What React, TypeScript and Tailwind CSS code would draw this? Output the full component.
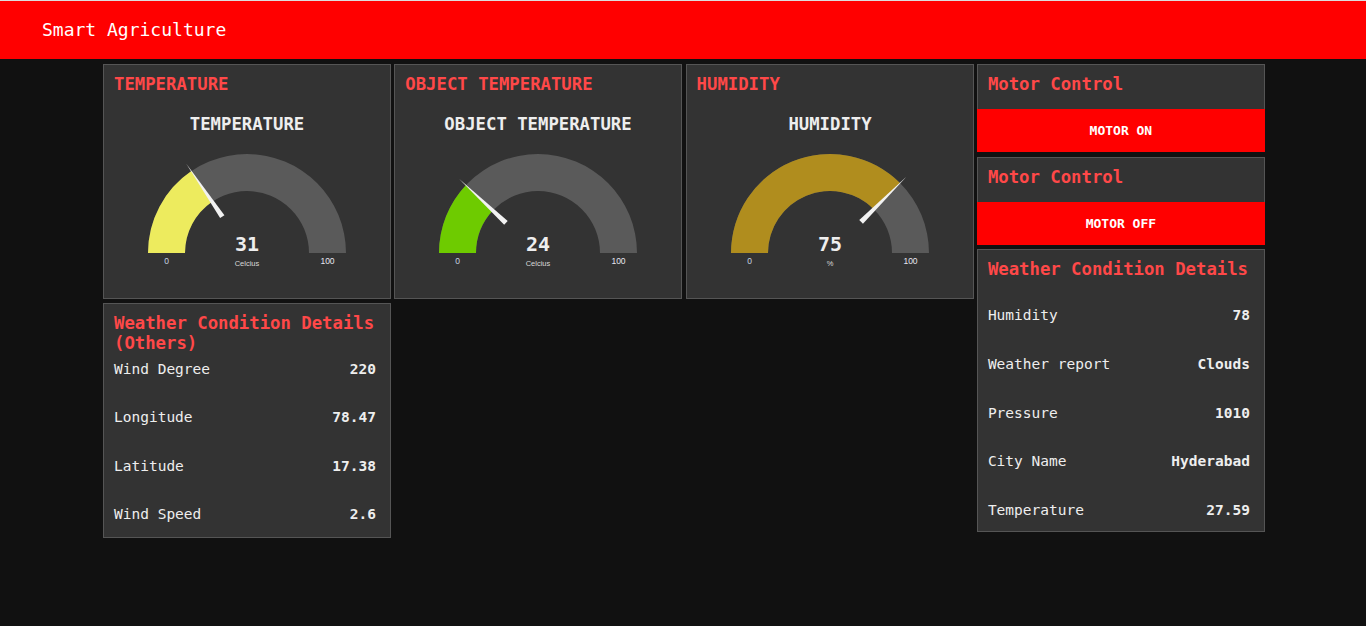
import React from "react";

const mono = "font-['DejaVu_Sans_Mono','Liberation_Mono',monospace]";

function pt(rad: number, deg: number, cx: number, cy: number) {
  const a = (deg * Math.PI) / 180;
  return [cx + rad * Math.cos(a), cy - rad * Math.sin(a)];
}

function Gauge({ title, value, unit, color }: { title: string; value: number; unit: string; color: string }) {
  const cx = 143, cy = 159, R = 99, r = 62;
  const end = 180 - 1.8 * value;
  const [o0x, o0y] = pt(R, 180, cx, cy);
  const [o1x, o1y] = pt(R, end, cx, cy);
  const [i1x, i1y] = pt(r, end, cx, cy);
  const [i0x, i0y] = pt(r, 180, cx, cy);
  const [bx, by] = pt(R, 0, cx, cy);
  const [bix, biy] = pt(r, 0, cx, cy);
  const bg = `M${o0x} ${o0y} A${R} ${R} 0 0 1 ${bx} ${by} L${bix} ${biy} A${r} ${r} 0 0 0 ${i0x} ${i0y} Z`;
  const fill = `M${o0x} ${o0y} A${R} ${R} 0 0 1 ${o1x} ${o1y} L${i1x} ${i1y} A${r} ${r} 0 0 0 ${i0x} ${i0y} Z`;
  const a = (end * Math.PI) / 180;
  const [tx, ty] = pt(108, end, cx, cy);
  const [nx, ny] = pt(44, end, cx, cy);
  const px = Math.sin(a) * 2.6, py = Math.cos(a) * 2.6;
  const needle = `${tx},${ty} ${nx + px},${ny + py} ${nx - px},${ny - py}`;

  return (
    <svg width="286" height="204" className="block">
      <text x={cx} y={30} textAnchor="middle" dominantBaseline="central" fill="#eeeeee" fontSize="17.3" fontWeight="bold" fontFamily="DejaVu Sans Mono, monospace">
        {title}
      </text>
      <path d={bg} fill="#5a5a5a" />
      <path d={fill} fill={color} />
      <polygon points={needle} fill="#f2f2f2" />
      <text x={cx} y={157} textAnchor="middle" fill="#eeeeee" fontSize="20" fontWeight="bold" fontFamily="DejaVu Sans Mono, monospace">
        {value}
      </text>
      <text x={cx} y={172} textAnchor="middle" fill="#d8d8d8" fontSize="7.5" fontFamily="Liberation Sans, Arial, sans-serif">
        {unit}
      </text>
      <text x={cx - 80.5} y={170} textAnchor="middle" fill="#c8d4e0" fontSize="8.5" fontFamily="Liberation Sans, Arial, sans-serif">
        0
      </text>
      <text x={cx + 80.5} y={170} textAnchor="middle" fill="#e6e6f0" fontSize="8.5" fontFamily="Liberation Sans, Arial, sans-serif">
        100
      </text>
    </svg>
  );
}

function GaugeCard(props: { heading: string; title: string; value: number; unit: string; color: string }) {
  return (
    <div className="h-[235px] bg-[#333333] border border-[#555555] overflow-hidden">
      <div className="px-[10px] pt-[9px] h-[29px] text-[17.3px] leading-[20px] font-bold text-[#ff4848]">{props.heading}</div>
      <Gauge title={props.title} value={props.value} unit={props.unit} color={props.color} />
    </div>
  );
}

function MotorCard({ label }: { label: string }) {
  return (
    <div className="h-[88px] bg-[#333333] border border-[#555555]">
      <div className="px-[10px] pt-[9px] h-[44px] text-[17.3px] leading-[20px] font-bold text-[#ff4848]">Motor Control</div>
      <button className="-mx-px w-[calc(100%+2px)] h-[43px] bg-[#ff0000] text-white text-[13px] font-bold flex items-center justify-center">
        {label}
      </button>
    </div>
  );
}

function DetailCard({ title, rows, height, gap, offset }: { title: string; rows: [string, string][]; height: string; gap: string; offset: string }) {
  return (
    <div className={`${height} bg-[#333333] border border-[#555555] overflow-hidden`}>
      <div className="px-[10px] pt-[9px] h-[46px] text-[17.3px] leading-[20px] font-bold text-[#ff4848]">{title}</div>
      <div className={`flex flex-col ${gap} ${offset} pl-[10px] pr-[14px]`}>
        {rows.map(([k, v]) => (
          <div key={k} className="h-[38px] flex items-center justify-between text-[14.5px] text-[#eeeeee]">
            <span>{k}</span>
            <span className="font-bold">{v}</span>
          </div>
        ))}
      </div>
    </div>
  );
}

export default function App() {
  return (
    <div className={`min-h-[626px] bg-[#111111] ${mono}`}>
      <div className="h-[59px] border-t border-[#dddddd] bg-[#ff0000] flex items-center pl-[42px]">
        <span className="text-white text-[18px] leading-none">Smart Agriculture</span>
      </div>

      <div className="mt-[5px] ml-[103px] grid grid-cols-[repeat(4,288px)] gap-x-[3.3px] items-start">
        <div className="flex flex-col gap-[4px]">
          <GaugeCard heading="TEMPERATURE" title="TEMPERATURE" value={31} unit="Celcius" color="#edeb5e" />
          <DetailCard
            title="Weather Condition Details (Others)"
            height="h-[235px]"
            gap="gap-[10.33px]"
            offset="mt-px"
            rows={[["Wind Degree", "220"], ["Longitude", "78.47"], ["Latitude", "17.38"], ["Wind Speed", "2.6"]]}
          />
        </div>
        <GaugeCard heading="OBJECT TEMPERATURE" title="OBJECT TEMPERATURE" value={24} unit="Celcius" color="#6ecb00" />
        <GaugeCard heading="HUMIDITY" title="HUMIDITY" value={75} unit="%" color="#b08d1e" />
        <div className="flex flex-col">
          <MotorCard label="MOTOR ON" />
          <div className="h-[5px]" />
          <MotorCard label="MOTOR OFF" />
          <div className="h-[4px]" />
          <DetailCard
            title="Weather Condition Details"
            height="h-[283px]"
            gap="gap-[10.75px]"
            offset="mt-px"
            rows={[["Humidity", "78"], ["Weather report", "Clouds"], ["Pressure", "1010"], ["City Name", "Hyderabad"], ["Temperature", "27.59"]]}
          />
        </div>
      </div>
    </div>
  );
}
